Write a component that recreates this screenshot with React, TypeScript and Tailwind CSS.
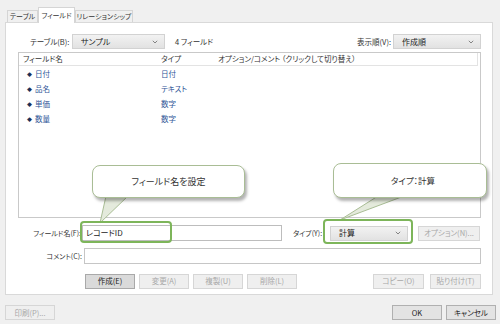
import React from "react";

const font =
  "font-['Noto_Sans_CJK_JP','Noto_Sans',sans-serif] [font-feature-settings:'palt']";

function Chevron() {
  return (
    <svg width="6" height="4" viewBox="0 0 6 4" className="shrink-0">
      <path d="M0.8 0.8 L3 3 L5.2 0.8" fill="none" stroke="#777" strokeWidth="0.9" />
    </svg>
  );
}

function Combo({ value, className }: { value: string; className: string }) {
  return (
    <div
      className={`${className} shrink-0 h-[15px] flex items-center justify-between pl-[8px] pr-[6px] bg-gradient-to-b from-[#f2f2f2] to-[#e2e2e2] border border-[#d2d2d2] text-[8px] text-[#222]`}
    >
      <span>{value}</span>
      <Chevron />
    </div>
  );
}

function Btn({
  label,
  className,
  disabled,
  active,
}: {
  label: string;
  className: string;
  disabled?: boolean;
  active?: boolean;
}) {
  const tone = disabled
    ? "bg-[#efefef] border-[#d6d6d6] text-[#a8a8a8]"
    : active
      ? "bg-[#dadada] border-[#a9a9a9] text-[#222]"
      : "bg-[#e3e3e3] border-[#b0b0b0] text-[#222]";
  return (
    <div
      className={`${className} shrink-0 h-[15px] flex items-center justify-center border text-[7.5px] ${tone}`}
    >
      {label}
    </div>
  );
}

const fields = [
  { name: "日付", type: "日付" },
  { name: "品名", type: "テキスト" },
  { name: "単価", type: "数字" },
  { name: "数量", type: "数字" },
];

export default function App() {
  return (
    <div
      className={`relative w-[500px] h-[324px] bg-[#f0f0f0] overflow-hidden whitespace-nowrap text-[#333] text-[7.5px] ${font}`}
    >
      {/* tabs */}
      <div className="flex items-end h-[22px] pl-[7px] text-[7px]">
        <div className="w-[31px] h-[12px] flex items-center justify-center border border-b-0 border-[#d5d5d5] bg-[#f0f0f0]">
          テーブル
        </div>
        <div className="relative z-10 -mb-px w-[37px] h-[16px] flex items-center justify-center border border-b-0 border-[#d5d5d5] bg-white">
          フィールド
        </div>
        <div className="w-[58px] h-[12px] flex items-center justify-center border border-b-0 border-[#d5d5d5] bg-[#f0f0f0]">
          リレーションシップ
        </div>
      </div>

      {/* tab panel */}
      <div className="ml-[5px] w-[488px] h-[273px] border border-[#d9d9d9] bg-white flex flex-col pl-[12px] pr-[11px]">
        <div className="mt-[11px] h-[15px] flex items-center">
          <span className="ml-[12px] w-[42px] shrink-0">テーブル(B):</span>
          <Combo value="サンプル" className="w-[93px]" />
          <span className="ml-[10px]">4 フィールド</span>
          <span className="ml-auto mr-[2px]">表示順(V):</span>
          <Combo value="作成順" className="w-[88px]" />
        </div>

        <div className="mt-[3px] h-[166px] border border-[#c9c9c9] flex flex-col">
          <div className="h-[13px] mr-[2px] flex items-center border-b border-r border-[#e3e3e3]">
            <span className="w-[142px] shrink-0 pl-[4px]">フィールド名</span>
            <span className="w-[57px] shrink-0">タイプ</span>
            <span>オプション/コメント （クリックして切り替え）</span>
          </div>
          {fields.map((f) => (
            <div key={f.name} className="h-[15px] flex items-center text-[#2f5597]">
              <span className="w-[142px] shrink-0 pl-[8px] flex items-center">
                <span className="w-[8px] text-[5px] text-[#1c2f55]">◆</span>
                <span>{f.name}</span>
              </span>
              <span>{f.type}</span>
            </div>
          ))}
        </div>

        <div className="mt-[7px] h-[16px] flex items-center">
          <span className="w-[64px] shrink-0 text-right pr-[1px] text-[7px]">フィールド名(F):</span>
          <div className="w-[200px] shrink-0 h-[16px] flex items-center border border-[#bdbdbd] bg-white pl-[3px] text-[8px] text-[#222]">
            レコードID
          </div>
          <span className="ml-[11px] w-[37px] shrink-0 text-[7px]">タイプ(Y):</span>
          <Combo value="計算" className="w-[78px]" />
          <Btn label="オプション(N)..." className="ml-[10px] w-[62px]" disabled />
        </div>

        <div className="mt-[7px] h-[16px] flex items-center">
          <span className="w-[66px] shrink-0 text-right pr-[2px] text-[7px]">コメント(C):</span>
          <div className="flex-1 h-[16px] border border-[#c6c6c6] bg-white" />
        </div>

        <div className="mt-[9px] h-[16px] flex items-center">
          <div className="ml-[67px] flex gap-[4px]">
            <Btn label="作成(E)" className="w-[50px]" active />
            <Btn label="変更(A)" className="w-[50px]" disabled />
            <Btn label="複製(U)" className="w-[50px]" disabled />
            <Btn label="削除(L)" className="w-[50px]" disabled />
          </div>
          <div className="ml-auto flex gap-[6px]">
            <Btn label="コピー(O)" className="w-[51px]" disabled />
            <Btn label="貼り付け(T)" className="w-[51px]" disabled />
          </div>
        </div>
      </div>

      {/* dialog buttons */}
      <div className="mt-[10px] flex items-center pl-[5px] pr-[4px]">
        <Btn label="印刷(P)..." className="w-[50px]" disabled />
        <div className="ml-auto flex gap-[4px]">
          <Btn label="OK" className="w-[50px]" />
          <Btn label="キャンセル" className="w-[50px]" />
        </div>
      </div>

      {/* annotation overlays */}
      <svg className="absolute inset-0 pointer-events-none" width="500" height="324">
        <polygon points="106,196 128,196 100,223" fill="#e4eadc" stroke="#a9bd95" strokeWidth="1" />
        <polygon points="378,196 404,196 340,220" fill="#e4eadc" stroke="#a9bd95" strokeWidth="1" />
      </svg>
      <div className="absolute left-[92px] top-[165px] w-[153px] h-[33px] rounded-[8px] border border-[#a9bd95] bg-white shadow-[2px_3px_3px_rgba(0,0,0,0.3)] flex items-center justify-center text-[9px] text-[#333]">
        フィールド名を設定
      </div>
      <div className="absolute left-[333px] top-[163px] w-[154px] h-[35px] rounded-[8px] border border-[#a9bd95] bg-white shadow-[2px_3px_3px_rgba(0,0,0,0.3)] flex items-center justify-center pl-[6px] text-[8.5px] text-[#333]">
        タイプ：計算
      </div>
      <div className="absolute left-[80px] top-[221px] w-[92px] h-[22px] rounded-[4px] border-2 border-[#7db55a]" />
      <div className="absolute left-[323px] top-[219px] w-[90px] h-[25px] rounded-[4px] border-2 border-[#7db55a]" />
    </div>
  );
}
